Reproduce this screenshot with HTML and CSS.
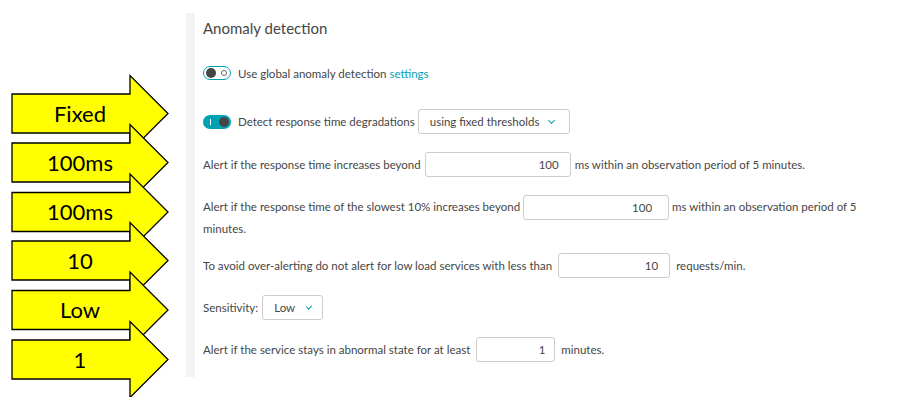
FILE: index.html
```html
<!DOCTYPE html>
<html lang="en">
<head>
  <meta charset="UTF-8" />
  <title>Anomaly detection</title>
  <link rel="stylesheet" href="styles.css">
</head>
<body>

  <svg id="callouts" width="186" height="397" viewBox="0 0 186 397">
    <g class="callout" transform="translate(0,113.5)">
      <polygon points="12,-19.5 130,-19.5 130,-38 168,0 130,38 130,19.5 12,19.5" />
      <text x="80" y="8">Fixed</text>
    </g>
    <g class="callout" transform="translate(0,162.5)">
      <polygon points="12,-19.5 130,-19.5 130,-38 168,0 130,38 130,19.5 12,19.5" />
      <text x="80" y="8">100ms</text>
    </g>
    <g class="callout" transform="translate(0,212)">
      <polygon points="12,-19.5 130,-19.5 130,-38 168,0 130,38 130,19.5 12,19.5" />
      <text x="80" y="8">100ms</text>
    </g>
    <g class="callout" transform="translate(0,260.5)">
      <polygon points="12,-19.5 130,-19.5 130,-38 168,0 130,38 130,19.5 12,19.5" />
      <text x="80" y="8">10</text>
    </g>
    <g class="callout" transform="translate(0,310)">
      <polygon points="12,-19.5 130,-19.5 130,-38 168,0 130,38 130,19.5 12,19.5" />
      <text x="80" y="8">Low</text>
    </g>
    <g class="callout" transform="translate(0,359.5)">
      <polygon points="12,-19.5 130,-19.5 130,-38 168,0 130,38 130,19.5 12,19.5" />
      <text x="80" y="8">1</text>
    </g>
  </svg>

  <main id="panel">
    <h2>Anomaly detection</h2>

    <div class="row row-global">
      <span class="toggle off"><span class="knob"></span><span class="ring"></span></span>
      <span>Use global anomaly detection <a href="#" class="link">settings</a></span>
    </div>

    <div class="row row-degrade">
      <span class="toggle on"><span class="bar"></span><span class="knob"></span></span>
      <span>Detect response time degradations</span>
      <span class="select select-wide">using fixed thresholds <span class="chevron"></span></span>
    </div>

    <div class="row row-resp">
      <span>Alert if the response time increases beyond</span>
      <input class="field field-resp" type="text" value="100" />
      <span>ms within an observation period of 5 minutes.</span>
    </div>

    <p class="wrap-row">Alert if the response time of the slowest 10% increases beyond <input class="field field-slow" type="text" value="100" /> ms within an observation period of 5 minutes.</p>

    <div class="row row-load">
      <span>To avoid over-alerting do not alert for low load services with less than</span>
      <input class="field field-load" type="text" value="10" />
      <span>requests/min.</span>
    </div>

    <div class="row row-sens">
      <span>Sensitivity:</span>
      <span class="select select-low">Low <span class="chevron"></span></span>
    </div>

    <div class="row row-state">
      <span>Alert if the service stays in abnormal state for at least</span>
      <input class="field field-state" type="text" value="1" />
      <span>minutes.</span>
    </div>
  </main>

</body>
</html>
```

FILE: styles.css
```css
/* Settings panel with callout annotations */
body {
  margin: 0;
  padding: 0;
  background: #ffffff;
  color: #454646;
  font-family: Lato, 'Open Sans', sans-serif;
  font-size: 11.5px;
  display: flex;
  align-items: flex-start;
  height: 397px;
  overflow: hidden;
}
#callouts {
  flex-shrink: 0;
  display: block;
}
.callout polygon {
  fill: #ffff00;
  stroke: #000000;
  stroke-width: 1.3;
  stroke-linejoin: miter;
}
.callout text {
  font-family: Lato, sans-serif;
  font-size: 22px;
  fill: #000000;
  text-anchor: middle;
}
#panel {
  margin-top: 13px;
  border-left: 9px solid #f3f3f3;
  padding: 0 0 15px 8px;
  height: 349px;
  width: 700px;
}
#panel h2 {
  margin: 5px 0 0 0;
  font-size: 15px;
  font-weight: 400;
  line-height: 20px;
}
.row {
  display: flex;
  align-items: center;
  gap: 4px;
  height: 25px;
  white-space: nowrap;
}
.row-global { margin-top: 24px; height: 22px; gap: 7px; }
.row-degrade { margin-top: 25px; gap: 7px; }
.row-degrade .select { margin-left: -4px; }
.row-resp { margin-top: 18px; }
.wrap-row {
  margin: 19px 0 0 0;
  line-height: 22px;
  width: 665px;
}
.row-load { margin-top: 13px; gap: 6px; }
.row-sens { margin-top: 17px; }
.row-state { margin-top: 17px; gap: 6px; }

.link {
  color: #00a1b2;
  text-decoration: none;
}

.toggle {
  position: relative;
  display: inline-block;
  width: 28px;
  height: 14px;
  border-radius: 8px;
  box-sizing: border-box;
  flex-shrink: 0;
}
.toggle.off {
  border: 1.5px solid #00a1b2;
  background: #ffffff;
}
.toggle.on {
  background: #00a1b2;
}
.toggle .knob {
  position: absolute;
  top: 2px;
  width: 10px;
  height: 10px;
  border-radius: 50%;
  background: #454646;
}
.toggle.off .knob { left: 1.5px; top: 0.5px; }
.toggle.on .knob { right: 2px; }
.toggle .ring {
  position: absolute;
  right: 3.5px;
  top: 2.5px;
  width: 4px;
  height: 4px;
  border: 1px solid #6b6b6b;
  border-radius: 50%;
}
.toggle .bar {
  position: absolute;
  left: 7px;
  top: 4px;
  width: 1px;
  height: 6px;
  background: #ffffff;
}

.select {
  display: inline-flex;
  align-items: center;
  height: 25px;
  box-sizing: border-box;
  border: 1px solid #cccccc;
  border-radius: 3px;
  padding: 0 11px;
  gap: 10px;
}
.select-wide { width: 152px; }
.select-low { width: 61px; gap: 12px; }
.chevron {
  width: 4px;
  height: 4px;
  border-right: 1.2px solid #00a1b2;
  border-bottom: 1.2px solid #00a1b2;
  transform: rotate(45deg);
  margin-top: -2px;
}

.field {
  height: 25px;
  box-sizing: border-box;
  border: 1px solid #cccccc;
  border-radius: 3px;
  padding: 0 11px 0 4px;
  font-family: inherit;
  font-size: 11.5px;
  color: #454646;
  text-align: right;
  background: #ffffff;
}
.field-resp { width: 146px; }
.field-slow {
  width: 146px;
  padding-right: 16px;
  vertical-align: middle;
  margin: -3px 0 -2px;
}
.field-load { width: 112px; }
.field-state { width: 79px; padding-right: 9px; }
```
